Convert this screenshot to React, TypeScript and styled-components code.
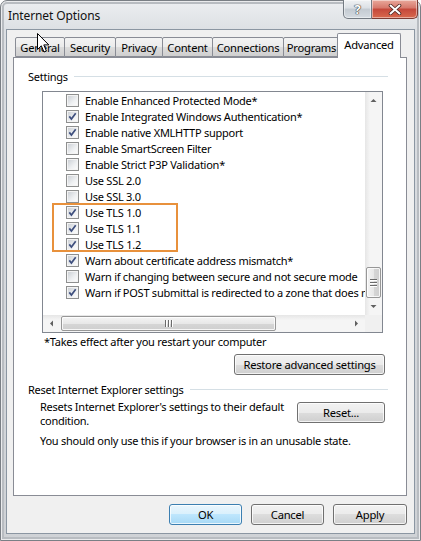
import React from 'react';
import styled, { createGlobalStyle } from 'styled-components';

const GlobalStyle = createGlobalStyle`
  html, body {
    margin: 0;
    padding: 0;
    background: #ffffff;
  }
  body {
    width: 421px;
    height: 541px;
    overflow: hidden;
    font-family: "Noto Sans", "Open Sans", sans-serif;
    font-size: 11px;
    letter-spacing: -0.25px;
    color: #000;
  }
`;

const Window = styled.div`
  position: relative;
  box-sizing: border-box;
  width: 421px;
  height: 541px;
  display: flex;
  flex-direction: column;
  padding: 0 5px 6px 5px;
  border: 1px solid #7a7f85;
  border-radius: 7px 7px 0 0;
  background: linear-gradient(#eceef1, #dcdfe3 30px, #cfd2d6);
  box-shadow: inset 0 0 0 1px rgba(255, 255, 255, 0.7), inset 0 0 0 3px #b8bcc1;
`;

const TitleBar = styled.div`
  height: 28px;
  display: flex;
  justify-content: space-between;
  align-items: flex-start;
`;

const Title = styled.div`
  padding: 6px 0 0 2px;
  font-size: 12px;
  letter-spacing: -0.1px;
  color: #111;
`;

const CaptionButtons = styled.div`
  display: flex;
  margin: -1px -3px 0 0;
`;

const CaptionButton = styled.div<{ $close?: boolean }>`
  width: ${(p) => (p.$close ? 46 : 29)}px;
  height: 19px;
  box-sizing: border-box;
  display: flex;
  align-items: center;
  justify-content: center;
  border: 1px solid ${(p) => (p.$close ? '#7c3b33' : '#737a82')};
  border-top: none;
  border-left: ${(p) => (p.$close ? 'none' : '1px solid #737a82')};
  border-radius: ${(p) => (p.$close ? '0 0 5px 0' : '0 0 0 5px')};
  background: ${(p) =>
    p.$close
      ? 'linear-gradient(#e9a99c, #d6776a 45%, #c4473a 50%, #d9694d)'
      : 'linear-gradient(#f0f2f4, #dbe0e5 45%, #c3cad1 50%, #d5dbe1)'};
  box-shadow: inset 0 0 0 1px rgba(255, 255, 255, 0.45);
  color: #fff;
  font-weight: bold;
  font-size: 13px;
  text-shadow: 0 0 1px #333, 0 0 1px #333, 0 0 1px #333;
`;

const Client = styled.div`
  flex: 1;
  display: flex;
  flex-direction: column;
  padding: 3px 7px 8px 6px;
  background: #f0f0f0;
  border: 1px solid #8b96a2;
`;

const TabStrip = styled.div`
  height: 24px;
  display: flex;
  align-items: flex-end;
  padding-left: 2px;
`;

const Tab = styled.div<{ $w: number; $active?: boolean }>`
  position: relative;
  box-sizing: border-box;
  width: ${(p) => p.$w}px;
  height: ${(p) => (p.$active ? 25 : 20)}px;
  margin-right: -1px;
  margin-left: ${(p) => (p.$active ? -2 : 0)}px;
  margin-bottom: ${(p) => (p.$active ? -1 : 0)}px;
  z-index: ${(p) => (p.$active ? 2 : 1)};
  display: flex;
  justify-content: center;
  padding-top: ${(p) => (p.$active ? 3 : 2)}px;
  border: 1px solid #898c95;
  border-bottom: ${(p) => (p.$active ? 'none' : '1px solid #898c95')};
  border-radius: 2px 2px 0 0;
  background: ${(p) =>
    p.$active ? '#ffffff' : 'linear-gradient(#f3f3f3, #ebebeb 50%, #dddddd 50%, #cfcfcf)'};
  font-size: 11.2px;
  white-space: nowrap;
`;

const TabPage = styled.div`
  box-sizing: border-box;
  height: 439px;
  display: flex;
  flex-direction: column;
  padding: 10px 18px 0 14px;
  background: #ffffff;
  border: 1px solid #898c95;
`;

const GroupHeader = styled.div<{ $mt?: number }>`
  height: 16px;
  margin-top: ${(p) => p.$mt ?? 0}px;
  display: flex;
  align-items: center;
  gap: 6px;
  white-space: nowrap;
  &::after {
    content: '';
    flex: 1;
    height: 1px;
    background: #d5dfe5;
  }
`;

const ListBox = styled.div`
  position: relative;
  box-sizing: border-box;
  width: 341px;
  height: 242px;
  margin: 7px 0 0 14px;
  display: flex;
  flex-direction: column;
  border: 1px solid #828790;
`;

const ListMain = styled.div`
  flex: 1;
  display: flex;
  min-height: 0;
`;

const Items = styled.div`
  position: relative;
  flex: 1;
  overflow: hidden;
`;

const Row = styled.div`
  height: 16px;
  display: flex;
  align-items: center;
  gap: 6px;
  padding-left: 23px;
  white-space: nowrap;
`;

const Box = styled.span`
  box-sizing: border-box;
  flex: none;
  width: 13px;
  height: 13px;
  display: flex;
  align-items: center;
  justify-content: center;
  border: 1px solid #8e8f8f;
  background: #f4f4f4;
`;

const BoxInner = styled.span`
  position: relative;
  width: 9px;
  height: 9px;
  background: linear-gradient(135deg, #cdd1d6, #eef0f2 60%, #fbfbfb);
`;

const Highlight = styled.div`
  position: absolute;
  left: 9px;
  top: 111px;
  width: 126px;
  height: 49px;
  box-sizing: border-box;
  border: 2px solid #e8913c;
  pointer-events: none;
`;

const VScroll = styled.div`
  width: 17px;
  display: flex;
  flex-direction: column;
  background: linear-gradient(to right, #e6e6e6, #f5f5f5 30%, #f5f5f5);
`;

const HScroll = styled.div`
  flex: 1;
  height: 17px;
  display: flex;
  align-items: center;
  background: linear-gradient(#e6e6e6, #f5f5f5 30%, #f5f5f5);
`;

const ListBottom = styled.div`
  height: 17px;
  display: flex;
`;

const Corner = styled.div`
  width: 17px;
  background: #f0f0f0;
`;

const ArrowBtn = styled.div`
  width: 17px;
  height: 17px;
  flex: none;
  display: flex;
  align-items: center;
  justify-content: center;
`;

const Spacer = styled.div`
  flex: 1;
`;

const VThumb = styled.div`
  box-sizing: border-box;
  height: 31px;
  margin: 0 1px;
  display: flex;
  flex-direction: column;
  align-items: center;
  justify-content: center;
  gap: 2px;
  border: 1px solid #979797;
  border-radius: 2px;
  background: linear-gradient(to right, #f4f4f4, #e8e8e8 50%, #d6d6d6 50%, #cfcfcf);
  box-shadow: inset 0 0 0 1px rgba(255, 255, 255, 0.8);
`;

const HThumb = styled.div`
  box-sizing: border-box;
  width: 215px;
  height: 15px;
  margin-left: 1px;
  display: flex;
  align-items: center;
  justify-content: center;
  gap: 2px;
  border: 1px solid #979797;
  border-radius: 2px;
  background: linear-gradient(#f4f4f4, #e8e8e8 50%, #d6d6d6 50%, #cfcfcf);
  box-shadow: inset 0 0 0 1px rgba(255, 255, 255, 0.8);
`;

const Grip = styled.span<{ $v?: boolean }>`
  width: ${(p) => (p.$v ? 7 : 1)}px;
  height: ${(p) => (p.$v ? 1 : 7)}px;
  background: #6b6b6b;
  box-shadow: ${(p) => (p.$v ? '0 1px 0 #fff' : '1px 0 0 #fff')};
`;

const Note = styled.div`
  height: 16px;
  margin: 1px 0 0 16px;
  line-height: 16px;
`;

const Button = styled.div<{ $w: number; $default?: boolean; $mt?: number }>`
  box-sizing: border-box;
  width: ${(p) => p.$w}px;
  height: 21px;
  flex: none;
  margin-top: ${(p) => p.$mt ?? 0}px;
  display: flex;
  align-items: center;
  justify-content: center;
  border: 1px solid ${(p) => (p.$default ? '#3c7fb1' : '#707070')};
  border-radius: 3px;
  background: ${(p) =>
    p.$default
      ? 'linear-gradient(#eaf6fd, #d9f0fc 50%, #bee6fd 50%, #a7d9f5)'
      : 'linear-gradient(#f2f2f2, #ebebeb 50%, #dddddd 50%, #cfcfcf)'};
  box-shadow: inset 0 0 0 1px rgba(255, 255, 255, 0.75);
  font-size: 11.2px;
  white-space: nowrap;
`;

const RightRow = styled.div<{ $mt: number; $mr?: number }>`
  display: flex;
  justify-content: flex-end;
  margin-top: ${(p) => p.$mt}px;
  margin-right: ${(p) => p.$mr ?? 0}px;
`;

const ResetRow = styled.div`
  display: flex;
  justify-content: space-between;
  align-items: flex-start;
  margin: 3px 3px 0 12px;
`;

const Desc = styled.div`
  width: 250px;
  line-height: 14px;
`;

const Warning = styled.div`
  margin: 6px 0 0 12px;
  line-height: 14px;
`;

const ButtonRow = styled.div`
  display: flex;
  justify-content: flex-end;
  gap: 9px;
  margin-top: 8px;
`;

const Cursor = styled.svg`
  position: absolute;
  left: 36px;
  top: 32px;
  z-index: 10;
`;

const Check = () => (
  <svg width="9" height="9" viewBox="0 0 9 9" style={{ position: 'absolute', left: 0, top: 0 }}>
    <path d="M1.3 4.4 L3.4 7 L7.7 1.2" fill="none" stroke="#3e4f7e" strokeWidth="1.7" />
  </svg>
);

const CheckBox: React.FC<{ checked: boolean }> = ({ checked }) => (
  <Box>
    <BoxInner>{checked && <Check />}</BoxInner>
  </Box>
);

const Arrow: React.FC<{ dir: 'up' | 'down' | 'left' | 'right' }> = ({ dir }) => {
  const d = {
    up: 'M0.5 4 L3.5 1 L6.5 4 Z',
    down: 'M0.5 1 L3.5 4 L6.5 1 Z',
    left: 'M4 0.5 L1 3.5 L4 6.5 Z',
    right: 'M1 0.5 L4 3.5 L1 6.5 Z',
  }[dir];
  const w = dir === 'up' || dir === 'down' ? 7 : 5;
  const h = dir === 'up' || dir === 'down' ? 5 : 7;
  return (
    <svg width={w} height={h} viewBox={`0 0 ${w} ${h}`}>
      <path d={d} fill="#606060" />
    </svg>
  );
};

const tabs: { label: string; w: number; active?: boolean }[] = [
  { label: 'General', w: 50 },
  { label: 'Security', w: 52 },
  { label: 'Privacy', w: 48 },
  { label: 'Content', w: 51 },
  { label: 'Connections', w: 72 },
  { label: 'Programs', w: 57 },
  { label: 'Advanced', w: 64, active: true },
];

const settings: [string, boolean][] = [
  ['Enable Enhanced Protected Mode*', false],
  ['Enable Integrated Windows Authentication*', true],
  ['Enable native XMLHTTP support', true],
  ['Enable SmartScreen Filter', false],
  ['Enable Strict P3P Validation*', false],
  ['Use SSL 2.0', false],
  ['Use SSL 3.0', false],
  ['Use TLS 1.0', true],
  ['Use TLS 1.1', true],
  ['Use TLS 1.2', true],
  ['Warn about certificate address mismatch*', true],
  ['Warn if changing between secure and not secure mode', false],
  ['Warn if POST submittal is redirected to a zone that does not permit posts', true],
];

const App: React.FC = () => {
  return (
    <>
      <GlobalStyle />
      <Window>
        <TitleBar>
          <Title>Internet Options</Title>
          <CaptionButtons>
            <CaptionButton>?</CaptionButton>
            <CaptionButton $close>
              <svg width="14" height="11" viewBox="0 0 14 11">
                <path d="M2.5 1.5 L11.5 9.5 M11.5 1.5 L2.5 9.5" stroke="#4a2520" strokeWidth="3.6" strokeLinecap="round" />
                <path d="M2.5 1.5 L11.5 9.5 M11.5 1.5 L2.5 9.5" stroke="#ffffff" strokeWidth="2" strokeLinecap="round" />
              </svg>
            </CaptionButton>
          </CaptionButtons>
        </TitleBar>
        <Client>
          <TabStrip>
            {tabs.map((t) => (
              <Tab key={t.label} $w={t.w} $active={t.active}>
                {t.label}
              </Tab>
            ))}
          </TabStrip>
          <TabPage>
            <GroupHeader>Settings</GroupHeader>
            <ListBox>
              <ListMain>
                <Items>
                  {settings.map(([label, checked]) => (
                    <Row key={label}>
                      <CheckBox checked={checked} />
                      {label}
                    </Row>
                  ))}
                  <Highlight />
                </Items>
                <VScroll>
                  <ArrowBtn>
                    <Arrow dir="up" />
                  </ArrowBtn>
                  <Spacer />
                  <VThumb>
                    <Grip $v />
                    <Grip $v />
                    <Grip $v />
                  </VThumb>
                  <ArrowBtn>
                    <Arrow dir="down" />
                  </ArrowBtn>
                </VScroll>
              </ListMain>
              <ListBottom>
                <HScroll>
                  <ArrowBtn>
                    <Arrow dir="left" />
                  </ArrowBtn>
                  <HThumb>
                    <Grip />
                    <Grip />
                    <Grip />
                  </HThumb>
                  <Spacer />
                  <ArrowBtn>
                    <Arrow dir="right" />
                  </ArrowBtn>
                </HScroll>
                <Corner />
              </ListBottom>
            </ListBox>
            <Note>*Takes effect after you restart your computer</Note>
            <RightRow $mt={4} $mr={3}>
              <Button $w={151}>Restore advanced settings</Button>
            </RightRow>
            <GroupHeader $mt={6}>Reset Internet Explorer settings</GroupHeader>
            <ResetRow>
              <Desc>Resets Internet Explorer's settings to their default condition.</Desc>
              <Button $w={88} $mt={2}>
                Reset...
              </Button>
            </ResetRow>
            <Warning>You should only use this if your browser is in an unusable state.</Warning>
          </TabPage>
          <ButtonRow>
            <Button $w={73} $default>
              OK
            </Button>
            <Button $w={73}>Cancel</Button>
            <Button $w={74}>Apply</Button>
          </ButtonRow>
        </Client>
        <Cursor width="13" height="21" viewBox="0 0 13 21">
          <path d="M0.5 0.5 L0.5 16.5 L4.3 12.8 L7 19 L9.4 18 L6.8 11.9 L11.8 11.9 Z" fill="#ffffff" stroke="#000000" strokeWidth="1" />
        </Cursor>
      </Window>
    </>
  );
};

export default App;
